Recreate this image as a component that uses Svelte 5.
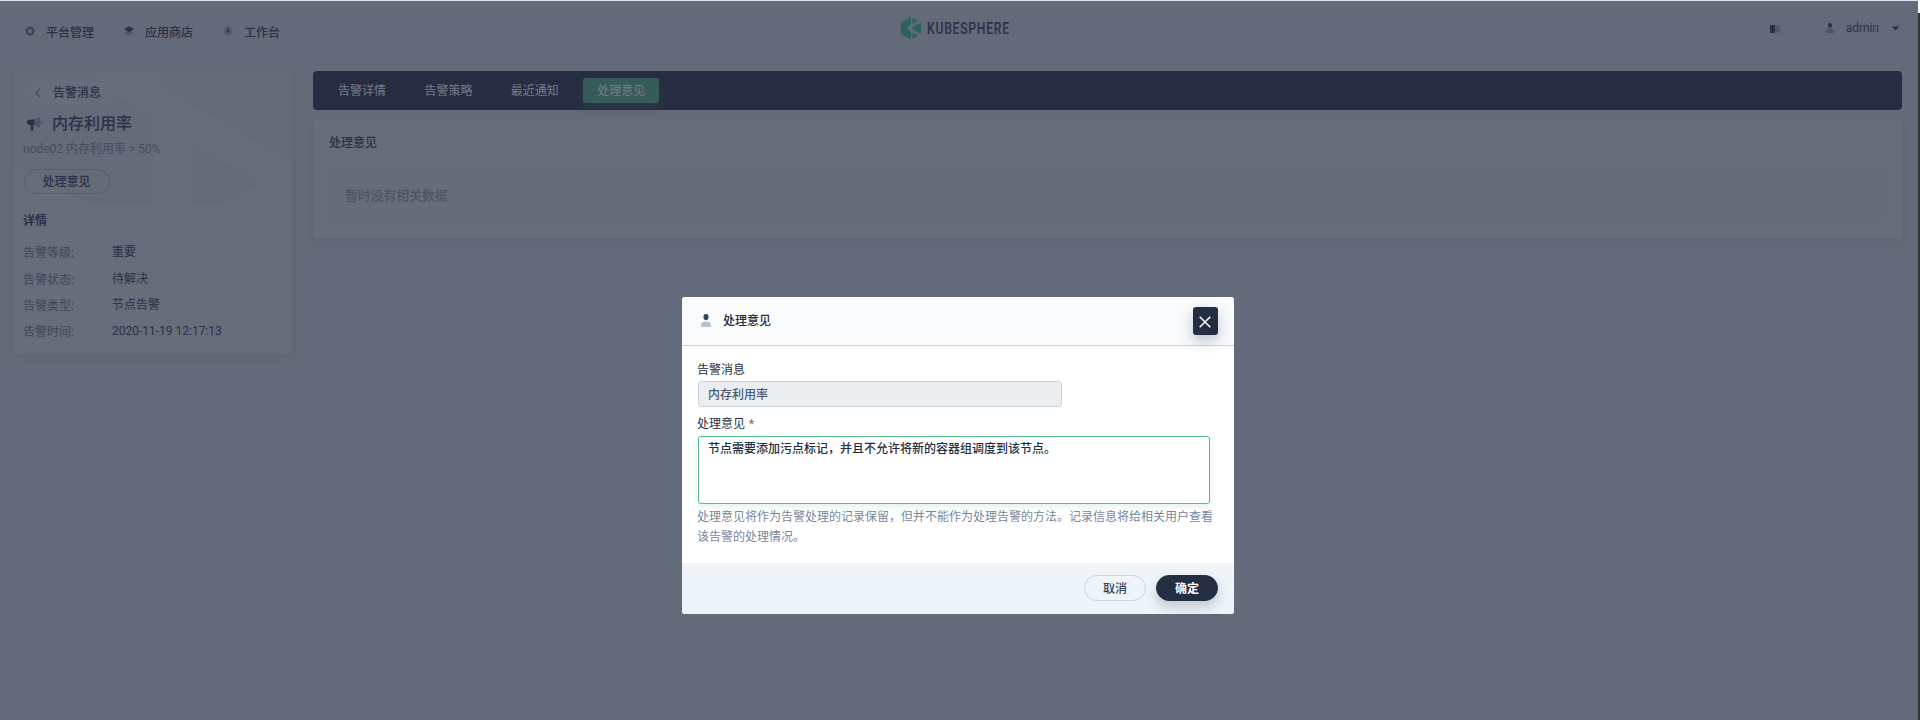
<script>
  const nav = [
    { icon: 'gear', label: '平台管理' },
    { icon: 'layers', label: '应用商店' },
    { icon: 'gauge', label: '工作台' }
  ];
  const tabs = ['告警详情', '告警策略', '最近通知', '处理意见'];
  const details = [
    ['告警等级:', '重要'],
    ['告警状态:', '待解决'],
    ['告警类型:', '节点告警'],
    ['告警时间:', '2020-11-19 12:17:13']
  ];
  const active = '处理意见';
</script>

<div class="page">
  <div class="strip"></div>
  <div class="edge"></div>
  <header>
    <nav class="top">
      {#each nav as n}
        <span class="item">
          <svg width="12" height="12" viewBox="0 0 12 12">
            {#if n.icon === 'gear'}
              <circle cx="6" cy="6" r="4" fill="#4d5667" stroke="#414a5d" stroke-width="1.1" stroke-dasharray="2 1.14" />
              <circle cx="6" cy="6" r="3.4" fill="none" stroke="#374055" stroke-width="1.2" />
              <circle cx="6" cy="6" r="2" fill="#5d6675" />
            {:else if n.icon === 'layers'}
              <path d="M1.500 7.500 6 5l4.500 2.500L6 10.500z" fill="#4c5668" />
              <path d="M1 4 6 1.200 11 4 6 7z" fill="#28324a" />
            {:else}
              <circle cx="6" cy="6" r="4.600" fill="#525c6d" />
              <path d="M6 2 7.300 6.500a1.300 1.300 0 1 1-2.600 0z" fill="#28324a" />
            {/if}
          </svg>
          <span>{n.label}</span>
        </span>
      {/each}
    </nav>
    <svg class="logo" width="130" height="24" viewBox="0 0 130 24">
      <path d="M10 0 0 5.700v11.200L10 22.500v-7.200L6.200 11.300 10 7z" fill="#2b6259" />
      <path d="M11.500.800v5.700L17 4zM20 5.500 10.500 11.300 20 17zM11.500 16v5.900L17 18.600z" fill="#2b6259" />
      <g transform="translate(26 0) scale(.74 1)">
        <text x="0" y="17" font-size="16.500" font-weight="500" textLength="111" lengthAdjust="spacing" fill="#2b3249">KUBESPHERE</text>
      </g>
    </svg>
    <div class="user">
      <svg class="book" width="10" height="8" viewBox="0 0 10 8"><path d="M0 0h5v8H0z" fill="#28324a" /><path d="M5 0h5v7.500H5z" fill="#505a6b" /></svg>
      <svg class="person" width="8" height="10" viewBox="0 0 10 13"><path d="M0 13v-2c0-2.600 2-3.500 5-3.500s5 .9 5 3.500v2z" fill="#4c5668" /><rect x="2.500" y="0" width="5" height="6.200" rx="2.400" fill="#28324a" /></svg>
      <span>admin</span>
      <svg class="caret" width="9" height="5" viewBox="0 0 9 5"><path d="M.5.500h8l-4 4z" fill="#28324a" /></svg>
    </div>
  </header>

  <div class="body">
    <aside>
      <svg class="deco" width="278" height="133" viewBox="0 0 278 133">
        <path d="M0 0h86L76 10 0 54zM141 12 278 91V0H160z" fill="#656b79" />
        <path d="M0 94V54L76 10l64 38v84H71zM176 71l70 41-35 20h-35z" fill="#646b79" />
      </svg>
      <div class="back">
        <svg width="6" height="10" viewBox="0 0 6 10"><path d="M5 .8 1 5l4 4.200" fill="none" stroke="#2c5a70" stroke-width="1.300" /></svg>
        <span>告警消息</span>
      </div>
      <div class="title">
        <svg width="16" height="14" viewBox="0 0 16 14">
          <path d="M7.500 2.500 13 0v11L7.500 8zM13.500 4.200h2v2.600h-2z" fill="#4c5668" />
          <path d="M0 5c0-1.500 1-2.500 2.500-2.500h5V8H6.300v5.500H3.600V8H2.300C.9 8 0 7 0 5z" fill="#28324a" />
        </svg>
        <span>内存利用率</span>
      </div>
      <div class="desc">node02 内存利用率 &gt; 50%</div>
      <div class="handle">处理意见</div>
      <div class="sub">详情</div>
      <dl>
        {#each details as [k, v]}
          <div class="row"><dt>{k}</dt><dd>{v}</dd></div>
        {/each}
      </dl>
    </aside>

    <main>
      <div class="tabs">
        {#each tabs as t}
          <span class="tab" class:on={t === active}>{t}</span>
        {/each}
      </div>
      <section>
        <h3>处理意见</h3>
        <div class="empty">暂时没有相关数据</div>
      </section>
    </main>
  </div>

  <div class="modal">
    <div class="mhead">
      <svg width="10" height="13" viewBox="0 0 10 13"><path d="M0 13v-2c0-2.600 2-3.500 5-3.500s5 .9 5 3.500v2z" fill="#b6c2cd" /><rect x="2.500" y="0" width="5" height="6.200" rx="2.400" fill="#324558" /></svg>
      <span>处理意见</span>
      <div class="close">
        <svg width="12" height="12" viewBox="0 0 12 12"><path d="M.7.700l10.600 10.600M11.300.700.700 11.300" stroke="#fff" stroke-width="1.500" /></svg>
      </div>
    </div>
    <div class="mbody">
      <div class="label">告警消息</div>
      <div class="input">内存利用率</div>
      <div class="label second">处理意见 <i>*</i></div>
      <div class="area">节点需要添加污点标记，并且不允许将新的容器组调度到该节点。</div>
      <p>处理意见将作为告警处理的记录保留，但并不能作为处理告警的方法。记录信息将给相关用户查看该告警的处理情况。</p>
    </div>
    <div class="mfoot">
      <span class="btn">取消</span>
      <span class="btn ok">确定</span>
    </div>
  </div>
</div>

<style>
  :global(body) { margin: 0; overflow: hidden; }
  .page, .page * { box-sizing: border-box; }
  .page {
    position: relative;
    width: 1920px;
    height: 720px;
    overflow: hidden;
    background: #636a79;
    font-family: Roboto, "Noto Sans CJK SC", sans-serif;
    font-size: 12px;
    line-height: 20px;
    color: #2a3148;
  }
  svg { display: block; flex: none; }
  .strip { height: 1px; background: #dfe8ea; }
  .edge {
    position: absolute;
    right: 0;
    top: 0;
    width: 2px;
    height: 720px;
    background: linear-gradient(#fff 13px, #333 13px);
  }
  header {
    display: grid;
    grid-template-columns: 901px 1fr auto;
    height: 70px;
    align-items: start;
  }
  .top { display: flex; gap: 29px; padding: 22px 0 0 24px; font-weight: 500; }
  .item { display: flex; gap: 10px; }
  .item svg { margin-top: 2px; }
  .logo { margin-top: 16px; }
  .user { display: flex; align-items: flex-start; padding: 17px 20px 0 0; color: #2d354b; }
  .book { margin: 7px 46px 0 0; }
  .person { margin: 5px 12px 0 0; }
  .caret { margin: 8px 0 0 12px; }
  .body { display: flex; gap: 21px; padding-left: 14px; align-items: flex-start; }
  aside {
    position: relative;
    width: 278px;
    height: 283px;
    padding: 10px;
    border-radius: 4px;
    background: #676d7a;
    box-shadow: 0 4px 8px rgba(36, 46, 66, .06);
  }
  .deco { position: absolute; left: 0; top: 0; }
  aside > div, dl { position: relative; }
  .back {
    display: flex;
    align-items: center;
    gap: 12px;
    width: 92px;
    height: 23px;
    padding-left: 11px;
    border-radius: 12px;
    background: #676d7a;
    font-weight: 500;
  }
  .title {
    display: flex;
    align-items: center;
    gap: 9px;
    height: 24px;
    margin-top: 8px;
    padding-left: 3px;
    font-size: 16px;
    font-weight: 500;
    line-height: 26px;
  }
  .desc { margin: 3px 0 0 -1px; color: #454d60; }
  .handle {
    width: 86px;
    height: 25px;
    margin-top: 10px;
    padding-right: 1px;
    border: 1px solid #575f6f;
    border-radius: 13px;
    text-align: center;
    line-height: 25px;
    font-weight: 500;
  }
  .sub { margin: 17px 0 0 -1px; font-weight: 700; }
  dl { margin: 9px 0 0 -1px; }
  .row { display: flex; height: 26.400px; align-items: center; }
  dt { width: 89px; color: #3f475b; }
  dd { margin: 0; position: relative; top: -1px; }
  main { width: 1589px; }
  .tabs {
    display: flex;
    gap: 10px;
    align-items: center;
    height: 39px;
    padding: 0 12px 0 11px;
    border-radius: 4px;
    background: #272e43;
    color: #777d8a;
  }
  .tab { height: 25px; padding: 0 14px; line-height: 26px; border-radius: 3px; }
  .tab + .tab { margin-left: .4px; }
  .on { background: #365c5a; box-shadow: 0 4px 8px rgba(54, 92, 90, .25); }
  section {
    height: 120px;
    margin-top: 9px;
    padding: 14px 16px;
    border-radius: 4px;
    background: #676d7a;
    box-shadow: 0 4px 8px rgba(36, 46, 66, .06);
  }
  h3 { margin: 0; font-size: 12px; line-height: 20px; font-weight: 500; }
  .empty {
    height: 56px;
    margin-top: 14px;
    padding-left: 16px;
    border-radius: 4px;
    background: #666c7a;
    font-size: 12.830px;
    font-weight: 500;
    line-height: 57px;
    color: #4d5566;
  }
  .modal {
    position: absolute;
    left: 682px;
    top: 297px;
    width: 552px;
    height: 317px;
    display: flex;
    flex-direction: column;
    overflow: hidden;
    border-radius: 3px;
    background: #fff;
    color: #242e42;
  }
  .mhead {
    display: flex;
    align-items: flex-start;
    height: 49px;
    padding: 10px 16px 0 19px;
    background: #f9fbfd;
    border-bottom: 1px solid #ccd3db;
    font-weight: 500;
  }
  .mhead > svg { margin: 7px 12px 0 0; }
  .mhead > span { margin-top: 4px; }
  .close {
    display: grid;
    place-items: center;
    width: 25px;
    height: 28px;
    margin-left: auto;
    border-radius: 3px;
    background: #242e42;
    box-shadow: 0 6px 14px rgba(36, 46, 66, .28);
  }
  .close svg { margin: 1px 1px 0 0; }
  .mbody { flex: 1; padding: 14px 16px 0; }
  .label { height: 20px; margin-left: -1px; line-height: 20px; }
  .label i { margin-left: 1px; font-style: normal; color: #ca481d; }
  .input {
    width: 364px;
    height: 26px;
    margin-top: 1px;
    padding-left: 9px;
    border: 1px solid #ccd3db;
    border-radius: 3px;
    background: #eaeef1;
    color: #4a5974;
    line-height: 26px;
    font-weight: 500;
  }
  .second { margin-top: 7px; }
  .area {
    width: 512px;
    height: 68px;
    margin-top: 2px;
    padding: 2px 9px;
    border: 1px solid #55bc8a;
    border-radius: 3px;
    box-shadow: 0 3px 6px rgba(85, 188, 138, .18);
    font-weight: 500;
  }
  p { margin: 3px -1px 0; color: #79879c; line-height: 20px; }
  .mfoot {
    display: flex;
    justify-content: flex-end;
    gap: 10px;
    height: 51px;
    padding: 12px 16px 0;
    background: #eff4f9;
  }
  .btn {
    width: 62px;
    height: 26px;
    border: 1px solid #ccd3db;
    border-radius: 13px;
    text-align: center;
    line-height: 27px;
    font-weight: 500;
    color: #36435c;
  }
  .ok {
    border-color: #242e42;
    background: #242e42;
    color: #fff;
    font-weight: 700;
    box-shadow: 0 6px 12px rgba(36, 46, 66, .22);
  }
</style>
